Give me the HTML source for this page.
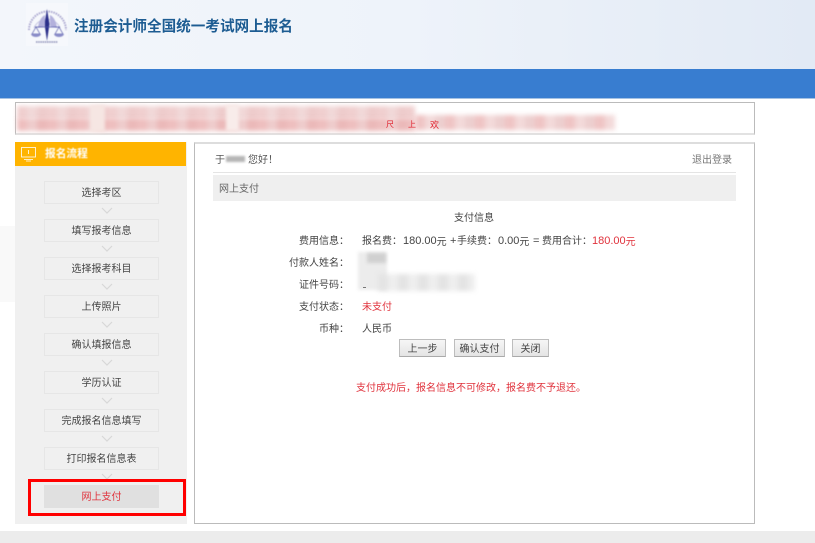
<!DOCTYPE html>
<html lang="zh"><head><meta charset="utf-8"><title>注册会计师全国统一考试网上报名</title>
<style>
*{box-sizing:border-box}
html,body{margin:0;padding:0}
body{width:815px;height:543px;position:relative;overflow:hidden;background:#fff;font-family:"Liberation Sans","Noto Sans CJK SC",sans-serif;font-size:10px;color:#333}
.a{position:absolute}
.t{position:absolute;white-space:nowrap;line-height:14px;filter:blur(.25px)}
.b{position:absolute;filter:blur(1.5px)}
.m{position:absolute;filter:blur(2.5px)}
.p{font-family:"Noto Sans CJK TC",sans-serif}
.d{font-size:11px}
.step{position:absolute;left:44px;width:115px;height:23px;border:1px solid #e6e6e6;background:#f0f0f0;text-align:center;line-height:24px;font-size:10px;color:#444;filter:blur(.2px)}
.lab{position:absolute;width:133px;left:216px;text-align:right;line-height:14px;color:#444;white-space:nowrap;filter:blur(.2px)}
.btn{position:absolute;top:339px;height:18px;background:linear-gradient(#f6f6f6,#e4e4e4);border:1px solid #bdbdbd;border-bottom-color:#aaa;text-align:center;line-height:19px;color:#444;font-size:10px}
</style></head><body>
<div class="a" style="left:0;top:0;width:815px;height:69px;background:linear-gradient(90deg,#f3f6fb 0%,#eef3fa 50%,#e2eaf5 100%)"></div>
<div class="a" style="left:26px;top:3px;width:42px;height:43px;background:#f6f8fc"></div>
<svg class="a" style="left:27px;top:4px;filter:blur(.4px)" width="41" height="41" viewBox="0 0 41 41">
<path d="M2 26A18 18 0 1 1 39 26" fill="none" stroke="#a9a6cf" stroke-width="2" stroke-dasharray="1.5 1"/>
<path d="M7 24A14 14 0 0 1 33 24" fill="none" stroke="#c3c2e0" stroke-width="1"/>
<path d="M20 5L22.5 20 20 37 17.5 20Z" fill="#2b2f8a"/>
<path d="M11 24C12 15 16 12 18 11L18 22ZM30 24C29 15 25 12 23 11L23 22Z" fill="#b3b1dc"/>
<path d="M8 23H33" stroke="#4b4fa5" stroke-width=".8"/>
<path d="M9 23L5 30H13ZM32 23L28 30H36Z" fill="none" stroke="#5a5eac" stroke-width=".7"/>
<path d="M4 30a5 3 0 0 0 10 0ZM27 30a5 3 0 0 0 10 0Z" fill="#8a8cc8"/>
<path d="M9 38H31" stroke="#8a8db5" stroke-width="1.5" stroke-dasharray="1.5 .7"/>
</svg>
<div class="t" style="left:74px;top:17px;font-size:14.6px;line-height:20px;font-weight:700;color:#1d5c92">注册会计师全国统一考试网上报名</div>
<div class="a" style="left:0;top:69px;width:815px;height:29px;background:#387dd0"></div>
<div class="a" style="left:0;top:98px;width:815px;height:1px;background:#a5c2e3"></div>

<div class="a" style="left:15px;top:102px;width:740px;height:33px;border:1px solid #bbb;border-bottom:2px solid #e2e2e2"></div>
<div class="m" style="left:17px;top:106px;width:398px;height:13px;background:repeating-linear-gradient(90deg,#f0cfcf 0 10px,#f1d8d8 10px 20px,#eeccCC 20px 30px)"></div>
<div class="m" style="left:17px;top:118px;width:398px;height:13px;background:repeating-linear-gradient(90deg,#eebfbf 0 10px,#eeCCCC 10px 20px,#ebb9b9 20px 30px)"></div>
<div class="m" style="left:415px;top:115px;width:200px;height:15px;background:repeating-linear-gradient(90deg,#efc4c4 0 10px,#f3dada 10px 20px,#edcfcf 20px 30px)"></div>
<div class="b" style="left:90px;top:105px;width:15px;height:27px;background:#f6e6e3"></div>
<div class="b" style="left:226px;top:105px;width:13px;height:26px;background:#f8ecea"></div>
<div class="t" style="left:386px;top:118px;color:#e0202c;font-size:8px">尺</div>
<div class="t" style="left:408px;top:118px;color:#e0202c;font-size:8px">上</div>
<div class="t" style="left:430px;top:118px;color:#e0202c;font-size:9px">欢</div>

<div class="a" style="left:0;top:226px;width:15px;height:76px;background:#f9f9f9"></div>
<div class="a" style="left:15px;top:142px;width:172px;height:382px;background:#f0f0f0"></div>
<div class="a" style="left:15px;top:142px;width:171px;height:24px;background:#ffb400"></div>
<svg class="a" style="left:21px;top:147px" width="16" height="15" viewBox="0 0 16 15" fill="none" stroke="#fff" stroke-width=".8"><rect x=".5" y=".5" width="14" height="9.5"/><path d="M7.5 3V7M3 12.5H12M5 14H10"/></svg>
<div class="t" style="left:45px;top:147px;font-size:10.7px;font-weight:700;color:#fff;filter:blur(.4px)">报名流程</div>

<div class="step" style="top:181px">选择考区</div>
<div class="step" style="top:219px">填写报考信息</div>
<div class="step" style="top:257px">选择报考科目</div>
<div class="step" style="top:295px">上传照片</div>
<div class="step" style="top:333px">确认填报信息</div>
<div class="step" style="top:371px">学历认证</div>
<div class="step" style="top:409px">完成报名信息填写</div>
<div class="step" style="top:447px">打印报名信息表</div>
<svg class="a" style="left:101px;top:204px" width="12" height="280" viewBox="0 0 12 280" fill="none" stroke="#d8d8d8" stroke-width="1.2">
<path d="M1 4L6 9 11 4M1 42L6 47 11 42M1 80L6 85 11 80M1 118L6 123 11 118M1 156L6 161 11 156M1 194L6 199 11 194M1 232L6 237 11 232M1 270L6 275 11 270"/></svg>
<div class="a" style="left:44px;top:485px;width:115px;height:23px;background:#e0e0e0;text-align:center;line-height:25px;color:#e0323c;filter:blur(.2px)">网上支付</div>
<div class="a" style="left:28px;top:479px;width:158px;height:37px;border:3px solid #f00"></div>

<div class="a" style="left:194px;top:142px;width:561px;height:382px;border:1px solid #bbb;border-top:2px solid #ddd"></div>
<div class="t" style="left:215px;top:154px;color:#555">于</div>
<div class="b" style="left:226px;top:156px;width:19px;height:6px;background:#b5b5b5;filter:blur(1px)"></div>
<div class="t" style="left:248px;top:152px;color:#555">您好<span class="p">！</span></div>
<div class="t" style="left:692px;top:154px;color:#777">退出登录</div>
<div class="a" style="left:213px;top:172px;width:523px;height:1px;background:#e4e4e4"></div>
<div class="a" style="left:213px;top:175px;width:523px;height:26px;background:#efefef"></div>
<div class="t" style="left:219px;top:183px;color:#666">网上支付</div>

<div class="t" style="left:454px;top:212px;color:#444">支付信息</div>
<div class="lab" style="top:233px">费用信息<span class="p">：</span></div>
<div class="lab" style="top:255px">付款人姓名<span class="p">：</span></div>
<div class="lab" style="top:277px">证件号码<span class="p">：</span></div>
<div class="lab" style="top:299px">支付状态<span class="p">：</span></div>
<div class="lab" style="top:321px">币种<span class="p">：</span></div>
<div class="t" style="left:362px;top:233px;color:#444">报名费<span class="p">：</span></div>
<div class="t" style="left:403px;top:234px;color:#444"><span class="d">180.00</span><span style="position:relative;top:1px">元</span></div>
<div class="t" style="left:450px;top:234px;color:#444"><span class="d">+</span></div>
<div class="t" style="left:457px;top:233px;color:#444">手续费<span class="p">：</span></div>
<div class="t" style="left:498px;top:234px;color:#444"><span class="d">0.00</span><span style="position:relative;top:1px">元</span></div>
<div class="t" style="left:533px;top:234px;color:#444"><span class="d">=</span></div>
<div class="t" style="left:542px;top:233px;color:#444">费用合计<span class="p">：</span></div>
<div class="t" style="left:592px;top:234px;color:#e0323c"><span class="d">180.00</span><span style="position:relative;top:1px">元</span></div>

<div class="b" style="left:358px;top:252px;width:29px;height:38px;background:#ececec"></div>
<div class="b" style="left:367px;top:253px;width:19px;height:10px;background:#d0d0d0"></div>
<div class="m" style="left:378px;top:274px;width:97px;height:17px;background:repeating-linear-gradient(90deg,#e4e4e4 0 10px,#eeeeee 10px 20px)"></div>
<div class="a" style="left:363px;top:287px;width:3px;height:1px;background:#777"></div>
<div class="t" style="left:362px;top:301px;color:#e0323c">未支付</div>
<div class="t" style="left:362px;top:323px;color:#444">人民币</div>
<div class="btn" style="left:399px;width:47px">上一步</div>
<div class="btn" style="left:454px;width:51px">确认支付</div>
<div class="btn" style="left:512px;width:37px">关闭</div>
<div class="t" style="left:356px;top:380px;color:#e0323c">支付成功后<span class="p">，</span>报名信息不可修改<span class="p">，</span>报名费不予退还<span class="p">。</span></div>

<div class="a" style="left:0;top:531px;width:815px;height:12px;background:#ececec"></div>
</body></html>
